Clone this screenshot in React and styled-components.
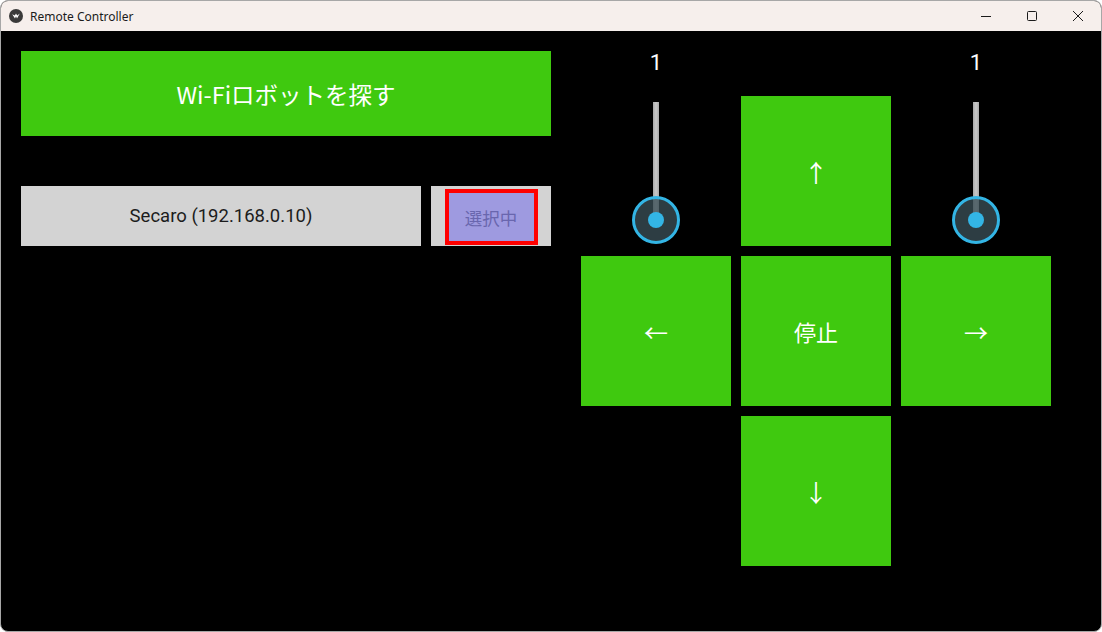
import React from 'react'
import styled, { createGlobalStyle } from 'styled-components'

const GlobalStyle = createGlobalStyle`
body {
  margin: 0;
  background: #ffffff;
  font-family: Roboto, "Noto Sans CJK JP", sans-serif;
}
`

const Window = styled.div`
width: 1102px;
height: 632px;
box-sizing: border-box;
border: 1px solid #a7a7a7;
border-radius: 8px;
overflow: hidden;
display: flex;
flex-direction: column;
background: #000;
`

const TitleBar = styled.div`
height: 30px;
flex-shrink: 0;
background: #f6efec;
display: flex;
align-items: center;
`

const AppIcon = styled.div`
width: 14px;
height: 14px;
margin-left: 8px;
margin-right: 7px;
display: flex;
`

const Title = styled.span`
font-family: "Noto Sans", "Open Sans", sans-serif;
font-size: 12px;
color: #1b1b1b;
flex: 1;
`

const Controls = styled.div`
display: flex;
height: 100%;
`

const ControlButton = styled.div`
width: 46px;
height: 100%;
display: flex;
align-items: center;
justify-content: center;
`

const Content = styled.div`
flex: 1;
display: flex;
padding: 20px;
`

const LeftColumn = styled.div`
width: 530px;
display: flex;
flex-direction: column;
gap: 50px;
`

const WifiButton = styled.div`
height: 85px;
background: #3fc90f;
color: #fff;
display: flex;
align-items: center;
justify-content: center;
font-family: "Noto Sans CJK JP", sans-serif;
font-size: 23.5px;
`

const DeviceRow = styled.div`
display: flex;
gap: 10px;
height: 60px;
`

const DeviceName = styled.div`
width: 400px;
background: #d3d3d3;
color: #1c1c1c;
display: flex;
align-items: center;
justify-content: center;
font-family: Roboto, sans-serif;
font-size: 18.5px;
`

const StatusCell = styled.div`
width: 120px;
background: #d3d3d3;
display: flex;
justify-content: center;
padding-top: 3px;
box-sizing: border-box;
`

const Selected = styled.div`
width: 93px;
height: 56px;
box-sizing: border-box;
border: 4px solid #ff0000;
background: #9e9ae0;
color: #6966ae;
display: flex;
align-items: center;
justify-content: center;
font-family: "Noto Sans CJK JP", sans-serif;
font-size: 17.5px;
`

const Pad = styled.div`
margin-left: 30px;
display: grid;
grid-template-columns: repeat(3, 150px);
grid-template-rows: 35px repeat(3, 150px);
gap: 10px;
`

const PadButton = styled.div`
grid-column: ${p => p.$col};
grid-row: ${p => p.$row};
background: #3fc90f;
color: #fff;
display: flex;
align-items: center;
justify-content: center;
font-family: "Noto Sans CJK JP", "DejaVu Sans", sans-serif;
font-size: ${p => p.$size || 24}px;
`

const SliderCell = styled.div`
grid-column: ${p => p.$col};
grid-row: 1 / 3;
display: flex;
flex-direction: column;
align-items: center;
`

const SliderLabel = styled.div`
color: #fff;
font-family: Roboto, sans-serif;
font-size: 22px;
line-height: 24px;
`

const Track = styled.div`
position: relative;
margin-top: 27px;
width: 48px;
height: 144px;
`

const Rail = styled.div`
position: absolute;
left: 21px;
top: 0;
width: 6px;
height: 118px;
background: linear-gradient(90deg, #a9a9a9, #c9c9c9 50%, #a9a9a9);
`

const Thumb = styled.div`
position: absolute;
left: 0;
bottom: 2px;
width: 48px;
height: 48px;
box-sizing: border-box;
border-radius: 50%;
border: 3px solid #33b5e5;
background: rgba(58, 78, 86, 0.78);
display: flex;
align-items: center;
justify-content: center;
&::after {
  content: '';
  width: 16px;
  height: 16px;
  border-radius: 50%;
  background: #33b5e5;
}
`

const Slider = ({ col, value }) => (
  <SliderCell $col={col}>
    <SliderLabel>{value}</SliderLabel>
    <Track>
      <Rail />
      <Thumb />
    </Track>
  </SliderCell>
)

const App = () => {
  return (
    <>
      <GlobalStyle />
      <Window>
        <TitleBar>
          <AppIcon>
            <svg width="14" height="14" viewBox="0 0 14 14">
              <circle cx="7" cy="7" r="7" fill="#3a3a3a" />
              <path d="M3.2 5.2 L6 9.6 L7 7.2 L8 9.6 L10.8 4.4 L8.2 6.4 L7 4.6 L5.8 6.4 Z" fill="#fff" />
            </svg>
          </AppIcon>
          <Title>Remote Controller</Title>
          <Controls>
            <ControlButton>
              <svg width="10" height="10" viewBox="0 0 10 10">
                <path d="M0 5.5 H10" stroke="#1b1b1b" strokeWidth="1" />
              </svg>
            </ControlButton>
            <ControlButton>
              <svg width="10" height="10" viewBox="0 0 10 10">
                <rect x="0.5" y="0.5" width="9" height="9" rx="1" fill="none" stroke="#1b1b1b" strokeWidth="1" />
              </svg>
            </ControlButton>
            <ControlButton>
              <svg width="10" height="10" viewBox="0 0 10 10">
                <path d="M0 0 L10 10 M10 0 L0 10" stroke="#1b1b1b" strokeWidth="1" />
              </svg>
            </ControlButton>
          </Controls>
        </TitleBar>
        <Content>
          <LeftColumn>
            <WifiButton>Wi-Fiロボットを探す</WifiButton>
            <DeviceRow>
              <DeviceName>Secaro (192.168.0.10)</DeviceName>
              <StatusCell>
                <Selected>選択中</Selected>
              </StatusCell>
            </DeviceRow>
          </LeftColumn>
          <Pad>
            <Slider col={1} value={1} />
            <Slider col={3} value={1} />
            <PadButton $col={2} $row={2}>↑</PadButton>
            <PadButton $col={1} $row={3}>←</PadButton>
            <PadButton $col={2} $row={3} $size={22}>停止</PadButton>
            <PadButton $col={3} $row={3}>→</PadButton>
            <PadButton $col={2} $row={4}>↓</PadButton>
          </Pad>
        </Content>
      </Window>
    </>
  )
}

export default App
